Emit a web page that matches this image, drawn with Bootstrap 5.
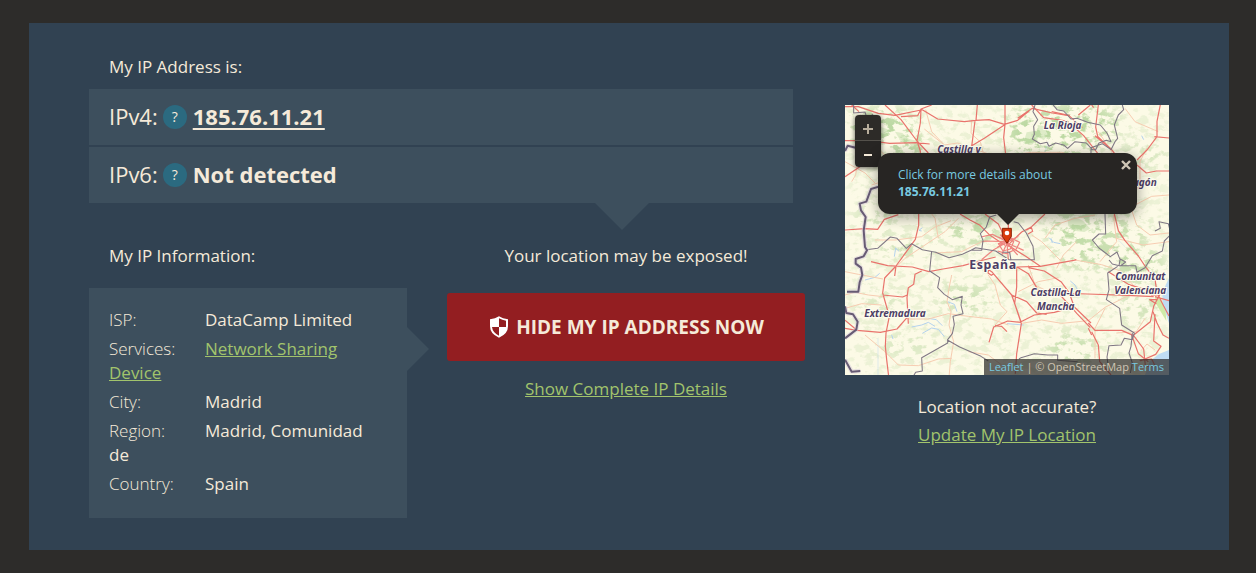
<!DOCTYPE html>
<html lang="en">
<head>
<meta charset="utf-8">
<meta name="viewport" content="width=device-width, initial-scale=1">
<title>My IP Address</title>
<link href="https://cdn.jsdelivr.net/npm/bootstrap@5.3.0/dist/css/bootstrap.min.css" rel="stylesheet">
<style>
  body { background: #2d2c2a; color: #f5ead9; font-family: "Open Sans", "Noto Sans", sans-serif; font-size: 17px; line-height: 24px; padding: 23px 27px 23px 29px; }
  .ip-panel { background: #314252; padding: 32px 60px; gap: 40px; }
  .go { color: #a2c46c; text-decoration: underline; }
  .go:hover { color: #b9d98a; }
  .ip-main { flex: 1 1 0; min-width: 0; }
  .lead-line { padding: 0 20px 10px; margin: 0; }
  .ip-lines { position: relative; margin-right: 12px; gap: 2px; }
  .ip-lines::after { content: ""; position: absolute; top: 100%; left: 72%; margin-left: -1px; border: 27px solid transparent; border-top-color: #3d4f5d; border-bottom: 0; }
  .ip-line { background: #3d4f5d; padding: 15px 20px 16px; font-size: 22px; line-height: 22px; }
  .ip-line a { color: inherit; text-underline-offset: 3px; }
  .ip-line b, .ip-line i { font-weight: 700; padding-bottom: 2px; }
  .ip-line i { font-weight: 400; font-style: normal; }
  .help { width: 24px; height: 24px; border: 0; padding: 0; border-radius: 50%; background: #2b6a80; color: #f5ead9; font-size: 14px; line-height: 24px; margin: 1px 6px 0 5px; }
  .ip-lower { padding-top: 41px; gap: 40px; }
  .info-col { flex: 0 1 318px; }
  .info-title { padding-left: 20px; margin-bottom: 20px; }
  .info-box { background: #3d4f5d; padding: 20px 20px 17px; position: relative; }
  .info-box::after { content: ""; position: absolute; left: 100%; top: 39px; border: 22px solid transparent; border-left-color: #3d4f5d; border-right: 0; }
  .info-box p { margin: 0 0 5px; }
  .info-box span { display: inline-block; width: 96px; font-weight: 300; }
  .cta-col { flex: 1 1 0; min-width: 0; }
  .cta-col p { margin-bottom: 25px; }
  .hide-btn { background: #931e21; color: #f5ead9; font-weight: 700; font-size: 19px; line-height: 24px; height: 68px; border: 0; border-radius: 3px; margin-bottom: 16px; }
  .hide-btn:hover { background: #7d191c; color: #f5ead9; }
  .hide-btn svg { margin: 0 8px 0 2px; }
  .map-col { width: 30%; padding-top: 50px; }
  .map-box { position: relative; height: 270px; overflow: hidden; background: #fcfae6; margin-bottom: 20px; }
  .map-box > svg { width: 100%; height: 100%; display: block; }
  .map-box > svg text { font-family: "Noto Sans", sans-serif; font-weight: 700; font-style: italic; font-size: 30px; fill: #4d3d66; stroke: #fffdf0; stroke-width: 6px; stroke-linejoin: round; paint-order: stroke; text-anchor: middle; }
  .map-box > svg .country { font-style: normal; font-size: 37px; letter-spacing: 2px; }
  .zoomer { position: absolute; left: 10px; top: 10px; width: 26px; border-radius: 4px; overflow: hidden; box-shadow: 0 1px 5px rgba(0,0,0,.65); }
  .zoomer button { display: flex; align-items: center; justify-content: center; width: 26px; height: 26px; border: 0; padding: 2px 0 0; background: #272523; }
  .zoomer button:first-child { background: #2d2b28; border-bottom: 1px solid #54514b; }
  .bubble { position: absolute; left: 33px; top: 48px; width: 259px; height: 61px; background: #272523; border-radius: 12px; box-shadow: 0 3px 14px rgba(0,0,0,.4); padding: 13px 20px; font-size: 12px; line-height: 17px; text-align: left; }
  .bubble a { color: #78cae0; text-decoration: none; }
  .bubble::after { content: ""; position: absolute; left: 119px; top: 100%; border: 11px solid transparent; border-top-color: #272523; border-bottom: 0; }
  .shut { position: absolute; top: 7px; right: 6px; width: 10px; height: 10px; border: 0; padding: 0; background: none; line-height: 0; }
  .credit { position: absolute; right: 0; bottom: 0; background: rgba(39,37,35,.7); color: #cfc6b5; font-size: 11px; line-height: 16px; padding: 0 5px; white-space: nowrap; }
  .credit a { color: #78cae0; text-decoration: none; }
</style>
</head>
<body>
<main class="ip-panel d-flex align-items-start">
  <section class="ip-main">
    <p class="lead-line">My IP Address is:</p>
    <div class="ip-lines d-flex flex-column">
      <div class="ip-line d-flex align-items-center"><i>IPv4:</i><button class="help" type="button" aria-label="About IPv4">?</button><b><a href="#v4">185.76.11.21</a></b></div>
      <div class="ip-line d-flex align-items-center"><i>IPv6:</i><button class="help" type="button" aria-label="About IPv6">?</button><b>Not detected</b></div>
    </div>
    <div class="ip-lower d-flex align-items-start">
      <div class="info-col">
        <p class="info-title">My IP Information:</p>
        <div class="info-box">
          <p><span>ISP:</span>DataCamp Limited</p>
          <p><span>Services:</span><a class="go" href="#services">Network Sharing Device</a></p>
          <p><span>City:</span>Madrid</p>
          <p><span>Region:</span>Madrid, Comunidad de</p>
          <p><span>Country:</span>Spain</p>
        </div>
      </div>
      <div class="cta-col text-center">
        <p>Your location may be exposed!</p>
        <button class="btn hide-btn w-100 d-flex align-items-center justify-content-center p-0" type="button">
          <svg width="18" height="22" viewBox="3 0 54 66" aria-hidden="true">
            <path fill="#fff" d="M30 1Q41 8 57 10V31Q57 54 30 65Q3 54 3 31V10Q19 8 30 1z"/>
            <path fill="#931e21" d="M30 7Q40 13 51 14V33H30zM9 33H30V59Q11 50 9 33z"/>
          </svg>
          HIDE MY IP ADDRESS NOW
        </button>
        <a class="go" href="#details">Show Complete IP Details</a>
      </div>
    </div>
  </section>
  <aside class="map-col text-center">
    <div class="map-box">
      <svg viewBox="0 0 972 810" preserveAspectRatio="xMidYMid slice" role="img" aria-label="Map of central Spain">
        <defs>
          <filter id="soft" x="-20%" y="-20%" width="140%" height="140%"><feGaussianBlur stdDeviation="22"/></filter>
          <filter id="speckle" filterUnits="userSpaceOnUse" x="0" y="0" width="972" height="810" color-interpolation-filters="sRGB">
            <feTurbulence type="fractalNoise" baseFrequency=".034 .05" numOctaves="4" seed="12"/>
            <feColorMatrix values="0 0 0 0 .74  0 0 0 0 .85  0 0 0 0 .64  7 0 0 0 -3.5" result="n"/>
            <feComposite in="n" in2="SourceGraphic" operator="in"/>
          </filter>
        </defs>
        <rect width="972" height="810" fill="#fcfae6"/>
        <!-- woodland -->
        <g filter="url(#speckle)"><g filter="url(#soft)" fill="#000">
          <rect width="972" height="810" opacity=".25"/>
          <ellipse cx="110" cy="65" rx="100" ry="55"/><ellipse cx="180" cy="125" rx="70" ry="40"/>
          <ellipse cx="570" cy="80" rx="90" ry="80"/><ellipse cx="700" cy="60" rx="120" ry="70"/>
          <ellipse cx="610" cy="130" rx="110" ry="40"/><ellipse cx="900" cy="150" rx="80" ry="30" opacity=".5"/>
          <ellipse cx="380" cy="380" rx="90" ry="45" opacity=".8"/><ellipse cx="180" cy="430" rx="90" ry="25" opacity=".7"/>
          <ellipse cx="690" cy="370" rx="90" ry="50" opacity=".9"/><ellipse cx="740" cy="450" rx="110" ry="40" opacity=".8"/>
          <ellipse cx="840" cy="380" rx="70" ry="50" opacity=".7"/><ellipse cx="880" cy="480" rx="80" ry="50" opacity=".8"/>
          <ellipse cx="90" cy="340" rx="60" ry="40" opacity=".5"/><ellipse cx="360" cy="580" rx="80" ry="50" opacity=".6"/>
          <ellipse cx="680" cy="730" rx="80" ry="40" opacity=".8"/><ellipse cx="880" cy="600" rx="60" ry="50" opacity=".6"/>
          <ellipse cx="100" cy="590" rx="80" ry="30" opacity=".4"/><ellipse cx="190" cy="720" rx="100" ry="30" opacity=".4"/>
        </g></g>
        <g fill="#bcdba4" opacity=".45">
          <path d="M60 32l22 10 18 22 26 8 10 18-16-6-14 8-22-18-24-14zM150 80l22 4 20 18 26 6 12 26-26-6-20-20-22-8zM545 82l24-4 10 24-24 18-20-6zM578 60l22 4 10 24-14 18-16-12zM668 345l20-10 26 12 22 24-18 10-30-4-18-14zM654 378l28 8 6 18-26-4zM395 345l30-16 26 8-14 28-30 16-22-4z"/>
        </g>
        <!-- sea and reservoirs -->
        <path d="M972 520l-10 20-10 30 2 30 10 30 8 25zM972 735l-30 12-28 22-14 41h72z" fill="#bfdcf3"/>
        <path d="M930 575l18 10 14 35 2 28-18-30-14-24z" fill="#cfeaa8"/>
        <g fill="none" stroke="#b4d2ee" stroke-width="3">
          <path d="M148 455l4-26 10 10M612 398l14 14 20 4M232 368l-10 8 8 2M140 690l4 12M486 656l50 4M200 666l30-6 20-8 20 12M232 685l28-16 20 4 18 22M250 640l24 4 18 18M308 590l20 8 8 22M676 528l14 12 6 12M60 525l30-8 14-12M890 92l6 12M618 400l4 14M48 130l4 22"/>
          <path d="M99 810V700M610 110l-14 40M820 405l20 20" stroke-width="2" opacity=".6"/>
        </g>
        <!-- minor roads -->
        <g fill="none" stroke="#f7cdb2" stroke-width="3" stroke-linejoin="round">
          <path d="M45 65l30 20 25 48 35 30M0 170l60 34 30 30M238 72l60 48 40-6 30 12 60 20M298 120l-38-40-18-66M380 45l-2 40 28 26 8 30M500 150l60-8 90 0 60 18M20 230l12-20 8-60 16-44M90 405l60 0 80-10 38-28 50-20M160 480l20-20 60-40 60-40 40-40M320 510l-8 40-6 40 12 30-6 40 14 50-10 60-6 70M0 570l30-8 40 8 45 5M0 610l50-14 60 4M60 690l60 50 40 40 60 2 60-20 40-2M190 642l60 0 60-16 60 8 70 8 50 18M370 740l60 10 40 30M430 510l20 30 16 60 20 20-36 40M530 655l60-10 60 10 80-8 50-40 60-30 60-26M550 480l20 60 40 20M520 560l60-30 60-12M690 465l80 14 60 20 50 60M780 610l-30 60 0 90M695 410l-40 40-20 40M600 400l30-40 60-20 60-10M560 390l30 20 60 60M760 80l40 60 20 60M840 10l30 40 70 30M905 130l-20 40 0 60-30 70 20 60 40 30 57-6M870 300l50-26 52-4M814 400l80 20 78-10M80 240l30-10M0 500l40 8 74 14M410 410l-60 30-80 4M240 300l30 40 10 60M805 330l10 80-50 60M900 640l-26 40-60 4M930 735l-24-18-18 20"/>
        </g>
        <!-- main roads -->
        <g fill="none" stroke="#e9736c" stroke-width="3.6" stroke-linejoin="round">
          <path d="M0 5l40 0 60 20 50 6 78-16M228 12l-2 42-10 54 10 30 0 6M120 0l48 44 48 64 34 36M168 35l50-3 10-20 32-12M228 12l50 30 80 8 34-4 40-2 46 14 40-12 34-28M393 46l4-46M390 48l-10 76-2 24M378 124l40-24 60-40M480 58l0-58M480 58l-4 40 6 50M20 0l22 20M518 40l44-30 60 14 50 8 40 36M0 107l70 0 64 8 80-2 40 4M0 215l60-40 16-24"/>
          <path d="M560 0l36 38 70 10 50 44 46 58M620 20l54 12M700 30l36-30M760 0l-8 66 6 28 42 40 18 24M800 134l-50-42M876 180l28 24 30-6 38 0M876 165l30-30 30-40 0-46 10-50M740 0l6 8M928 95l44 4"/>
          <path d="M221 327v34l-10 42-58 80-34 36 -6 45 20 70-10 50-2 40 4 40 6 50M0 375l60-4 38 2 20-30 42-14M78 470l50 12 74 4 50 14 42-8 60-10 50-14 48-12M230 498l-20 10-4 30-16 10-4 30 4 78M113 570l60 6 14-6M0 670l36 6 70 6 50-10 30-34M36 676l-36-30M153 483l-4 30"/>
          <path d="M345 327l30 18 30 16 30 30 45 30M420 327l40 30 24 50M490 355l0 70M600 327l-40 38-30 16-42 40M545 375l14-8 4 12-14 8M488 420l54 34 44 30 100-18 8-2M586 484l-72 2M440 500l60 70 28 80M440 500l-9-6-2 10 10 7 8-5M515 486l0 60-6 50 20 60-14 90-4 60M516 486l34 20 30 50 60 8 40 44 16 18 40 42M550 488l48 10 50 32 24 32 16 44 50 48M668 565l60 2 120 4 78 4M500 570l45 20 30 34 30 4M528 650l40-20 60-8 30-8M528 652l-40-4-42 18-14 46M450 662l20 2 16 16M730 654l20 22 80 0 36 16M740 680l20 40 4 50 34 40M866 692l30 40 6 60M866 690l50-40 10-46 10-20"/>
          <path d="M808 327l12 50 20 30 40 46 20 30 30 40 6 40 20 40 16 30M790 500l60 38 70 22M860 690l20 56 30 24M886 768l46-20 16-24-22-16 4-80M918 570l26 0-8 14-22 0 20 12M930 575l42 12M924 620l12 34 18 36 18 10M884 766l36-4 10 20-40 4M740 690l-10-20"/>
          <path d="M486 405l-36-12M486 405l-28 20M486 410l-44-22-34 8M486 410l-66-2-10 3M486 412l-40 22-36 30M486 414l-16 36M486 414l4 50M486 414l32 36M486 414l50 22M490 410l30-16M466 390l20 20-26 6 14 22 22-6 10-22-22-18zM500 400l24 12-10 20-30 14-26-8M476 376l10 24M494 376l6 30" stroke="#ef8580"/>
        </g>
        <!-- regional borders -->
        <g fill="none" stroke="#807885" stroke-width="3.2" stroke-linejoin="round">
          <path d="M26 0v24l34-3 6 20 14 6 2-20"/>
          <path d="M570 0l-6 20 14 24-12 20 2 24-6 14 10 6 14 8 20-4 6 12 20-10 24 6 12 10 22-20 34 4 18 20 10 0 10-20 22-8 14 4-12-26-20-24-38-8-32-12-18 2-22-24-20-4-16-20-14 0M738 128l34-12 26 18 12-24 8-10-10-40 12-30 16-16-4-14M738 128v16"/>
          <path d="M64 434l34-4 38-34 20 4 28 30 16-14 32 18 40 8 40 16 40-10 26-12 32 0 4-30-8-20 18-20 10-30 20-6M378 436l14-8 60 10 40 26 76 0-4-40-20-40-24-30-14-4M498 466l-4-24-22 0M260 438l-6 60 30 20-6 30 20 20 24 16 30-10-4 26 6 26-30 8 4 24-6 28-14 18 0 10-78 44 2 40-20 4-24 40M306 704l38 22 64 28 22 14"/>
          <path d="M780 327l2 60-20 0-20 18 20 24 34 26 20-14 8 20 18 10-16 12-24-6-10-12M826 460l-4 22 50 0 4 20 24-14 22-36 30-14 6-30 20-20-8-32-28-6 4 20-16 8M818 484l-30 20 4 50-8 30 40 26 6 50 38 24-6 20-24-4-10 20-36 2-6 34 4 30M862 684l-4 40-6 20 10 30-6 30M528 758l40-12 40 4 30 0 0 16 60 4M528 758l-6 4"/>
        </g>
        <!-- national border -->
        <g fill="none" stroke-linejoin="round">
          <path stroke="#d5cad9" stroke-width="13" opacity=".5" d="M0 138l8-16 24 6M104 244l-26 8-14 38-20 6 4 20 14 20-6 40 4 50 6 10-10 18-24 8 0 14 16 12 4 22-8 22-4 28-34 0M0 604l4 20 20 4 14 22-4 24-34 26M0 764l20 36 26-2"/>
          <path stroke="#675b74" stroke-width="6" d="M0 138l8-16 24 6M104 244l-26 8-14 38-20 6 4 20 14 20-6 40 4 50 6 10-10 18-24 8 0 14 16 12 4 22-8 22-4 28-34 0M0 604l4 20 20 4 14 22-4 24-34 26M0 764l20 36 26-2"/>
        </g>
        <text x="653" y="72">La Rioja</text>
        <text x="342" y="144">Castilla y</text>
        <text x="884" y="242">Aragón</text>
        <text x="150" y="636">Extremadura</text>
        <text x="632" y="573">Castilla-La</text><text x="632" y="614">Mancha</text>
        <text x="886" y="525">Comunitat</text><text x="886" y="567">Valenciana</text>
        <text x="444" y="493" class="country">España</text>
        <path d="M472 370h27v24l-13 21-14-21z" fill="#d93a0b" stroke="#8c2408" stroke-width="3"/>
        <circle cx="486" cy="384" r="7" fill="#fff"/>
      </svg>
      <div class="zoomer">
        <button type="button" aria-label="Zoom in"><svg width="12" height="12" viewBox="0 0 12 12"><path d="M6 1v10M1 6h10" stroke="#b8ae9c" stroke-width="2"/></svg></button>
        <button type="button" aria-label="Zoom out"><svg width="12" height="12" viewBox="0 0 12 12"><path d="M2 6h8" stroke="#f5ead9" stroke-width="2"/></svg></button>
      </div>
      <div class="bubble">
        <a href="#ip">Click for more details about<br><b>185.76.11.21</b></a>
        <button class="shut" type="button" aria-label="Close"><svg width="10" height="10" viewBox="0 0 10 10"><path d="M1 1l8 8M9 1L1 9" stroke="#cfc6b5" stroke-width="2.4"/></svg></button>
      </div>
      <div class="credit"><a href="#leaflet">Leaflet</a> | © OpenStreetMap <a href="#terms">Terms</a></div>
    </div>
    <p class="mb-1">Location not accurate?</p>
    <a class="go" href="#update">Update My IP Location</a>
  </aside>
</main>
<script src="https://cdn.jsdelivr.net/npm/bootstrap@5.3.0/dist/js/bootstrap.bundle.min.js"></script>
</body>
</html>
